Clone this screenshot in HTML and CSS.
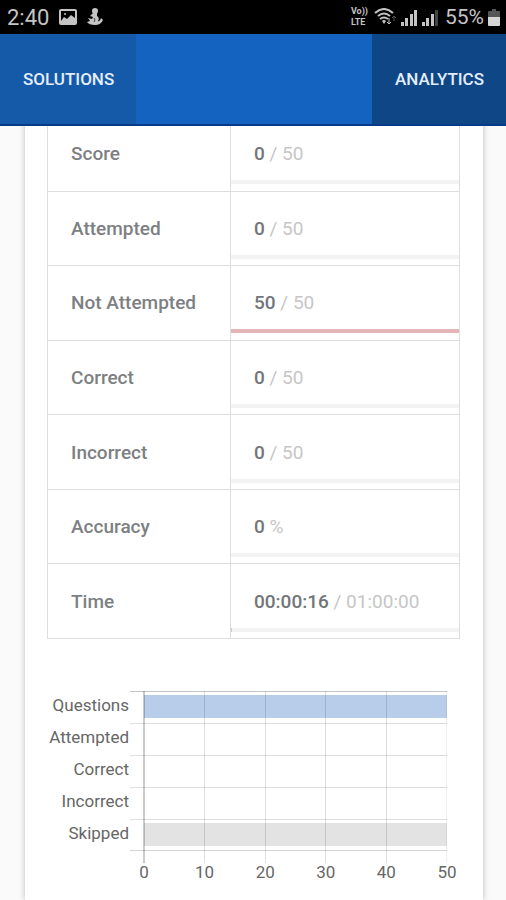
FILE: index.html
```html
<!DOCTYPE html>
<html lang="en">

<head>
	<meta charset="UTF-8">
	<meta name="viewport" content="width=device-width, initial-scale=1.0">
	<title>Analytics</title>
	<link rel="stylesheet" href="styles.css">
</head>

<body>

	<div class="top">
		<div class="status">
			<span class="clock">2:40</span>
			<svg class="icon-image" width="18" height="16" viewBox="0 0 18 16">
				<rect x="1" y="1" width="16" height="14" rx="1" fill="none" stroke="#c4c4c4" stroke-width="2" />
				<path d="M2 12 L5 8 L8 10 L12 6 L16 9 V14 H2 Z" fill="#c4c4c4" />
				<circle cx="6" cy="5" r="1" fill="#c4c4c4" />
			</svg>
			<svg class="icon-app" width="16" height="18" viewBox="0 0 16 18">
				<circle cx="8" cy="3" r="3" fill="#c4c4c4" />
				<path d="M6 5 H10 L10 8 Q13 10 11 13 Q13 14 14 10 L16 12 Q14 17 8 17 Q2 17 0 14 L3 13 L1 10 L5 11 L6 9 L3 8 Z" fill="#c4c4c4" />
				<path d="M7 10 L8 12 L7 14" fill="none" stroke="#444" />
			</svg>
			<span class="space"></span>
			<span class="volte">
				<span>Vo))</span>
				<span>LTE</span>
			</span>
			<svg class="icon-wifi" width="22" height="18" viewBox="0 0 22 18" fill="none" stroke="#c4c4c4" stroke-width="2">
				<path d="M1 5 Q10 -3 19 5" />
				<path d="M4 8 Q10 3 16 8" />
				<path d="M6 11 Q10 8 14 11" />
				<path d="M8 13 Q10 11 12 13 L10 16 Z" fill="#c4c4c4" stroke="none" />
				<path d="M15 10 V16 M13 14 L15 16 L17 14" stroke-width="1" />
				<path d="M20 8 V13 M18 10 L20 8 L22 10" stroke="#555" stroke-width="1" />
			</svg>
			<svg class="icon-signal" width="16" height="17" viewBox="0 0 16 17" fill="#c4c4c4">
				<rect x="0" y="13" width="3" height="4" />
				<rect x="4" y="9" width="3" height="8" />
				<rect x="9" y="5" width="3" height="12" />
				<rect x="13" y="1" width="3" height="16" />
			</svg>
			<svg class="icon-signal" width="16" height="17" viewBox="0 0 16 17" fill="#c4c4c4">
				<rect x="0" y="13" width="3" height="4" />
				<rect x="4" y="9" width="3" height="8" />
				<rect x="9" y="5" width="3" height="12" />
				<rect x="13" y="1" width="3" height="16" fill="#444" />
			</svg>
			<span class="percent">55%</span>
			<svg class="icon-battery" width="12" height="17" viewBox="0 0 12 17">
				<path d="M4 0 H8 V2 H11 Q12 2 12 3 V8 H0 V3 Q0 2 1 2 H4 Z" fill="#555" />
				<path d="M0 8 H12 V16 Q12 17 11 17 H1 Q0 17 0 16 Z" fill="#d6d6d6" />
			</svg>
		</div>
		<nav class="tabs">
			<button type="button" class="tab">SOLUTIONS</button>
			<button type="button" class="tab tab-active">ANALYTICS</button>
		</nav>
	</div>

	<main class="card">
		<table class="stats">
			<tbody>
				<tr>
					<th scope="row">Score</th>
					<td>
						<div class="value">0 <span>/ 50</span></div>
						<div class="bar"></div>
					</td>
				</tr>
				<tr>
					<th scope="row">Attempted</th>
					<td>
						<div class="value">0 <span>/ 50</span></div>
						<div class="bar"></div>
					</td>
				</tr>
				<tr>
					<th scope="row">Not Attempted</th>
					<td>
						<div class="value">50 <span>/ 50</span></div>
						<div class="bar"><div class="fill fill-red" style="width: 100%"></div></div>
					</td>
				</tr>
				<tr>
					<th scope="row">Correct</th>
					<td>
						<div class="value">0 <span>/ 50</span></div>
						<div class="bar"></div>
					</td>
				</tr>
				<tr>
					<th scope="row">Incorrect</th>
					<td>
						<div class="value">0 <span>/ 50</span></div>
						<div class="bar"></div>
					</td>
				</tr>
				<tr>
					<th scope="row">Accuracy</th>
					<td>
						<div class="value">0 <span>%</span></div>
						<div class="bar"></div>
					</td>
				</tr>
				<tr>
					<th scope="row">Time</th>
					<td>
						<div class="value">00:00:16 <span>/ 01:00:00</span></div>
						<div class="bar"><div class="fill" style="width: 0.44%"></div></div>
					</td>
				</tr>
			</tbody>
		</table>

		<div class="chart">
			<div class="chart-row">
				<div class="chart-label">Questions</div>
				<div class="track"><div class="chart-bar blue" style="width: 100%"></div></div>
			</div>
			<div class="chart-row">
				<div class="chart-label">Attempted</div>
				<div class="track"></div>
			</div>
			<div class="chart-row">
				<div class="chart-label">Correct</div>
				<div class="track"></div>
			</div>
			<div class="chart-row">
				<div class="chart-label">Incorrect</div>
				<div class="track"></div>
			</div>
			<div class="chart-row">
				<div class="chart-label">Skipped</div>
				<div class="track"><div class="chart-bar grey" style="width: 100%"></div></div>
			</div>
			<!-- vertical grid lines, drawn over the bars -->
			<div class="grid-lines">
				<div></div>
				<div></div>
				<div></div>
				<div></div>
				<div></div>
			</div>
			<div class="axis">
				<span>0</span>
				<span>10</span>
				<span>20</span>
				<span>30</span>
				<span>40</span>
				<span>50</span>
			</div>
		</div>
	</main>

</body>

</html>
```

FILE: styles.css
```css
* {
	box-sizing: border-box;
}

body {
	margin: 0;
	min-height: 100vh;
	display: flex;
	flex-direction: column;
	background-color: #fafafa;
	font-family: Roboto, sans-serif;
}

.top {
	position: sticky;
	top: 0;
	z-index: 2;
}

/* status bar */
.status {
	display: flex;
	align-items: center;
	height: 34px;
	padding: 0 6px 0 7px;
	background-color: #000;
	color: #c4c4c4;
	font-size: 22px;
}

.space {
	flex: 1;
}

.icon-image {
	margin-left: 10px;
}

.icon-app {
	margin-left: 10px;
}

.volte {
	display: flex;
	flex-direction: column;
	font-size: 9px;
	font-weight: 700;
	line-height: 11px;
}

.icon-wifi {
	margin-left: 6px;
}

.icon-signal {
	margin-left: 5px;
}

.percent {
	margin-left: 7px;
	font-size: 21px;
}

.icon-battery {
	margin-left: 4px;
}

/* tabs */
.tabs {
	display: flex;
	justify-content: space-between;
	height: 92px;
	background-color: #1563c0;
	border-bottom: 2px solid #043a86;
}

.tab {
	padding: 0 22px 0 23px;
	border: none;
	background-color: #155aa9;
	color: #e4eefa;
	font-family: inherit;
	font-size: 17px;
	font-weight: 500;
	cursor: pointer;
}

.tab-active {
	background-color: #0f4686;
}

.card {
	flex: 1;
	margin: -10px 23px 0 25px;
	padding: 0 23px 16px 22px;
	background-color: #fff;
	box-shadow: 0 0 6px rgba(0, 0, 0, 0.25);
}

/* results table */
.stats {
	width: 100%;
	height: 523px;
	table-layout: fixed;
	border-collapse: collapse;
	font-size: 19px;
	color: #7d8083;
}

.stats th,
.stats td {
	padding: 0;
	border: 1px solid #dedede;
}

.stats th {
	width: 183px;
	padding-left: 23px;
	text-align: left;
	font-weight: 500;
}

.value {
	padding: 10px 0 0 23px;
	line-height: 53px;
	color: #72767a;
	font-weight: 500;
}

.value span {
	color: #c6c6c6;
	font-weight: 400;
}

.bar {
	height: 4px;
	margin-bottom: 6px;
	background-color: #f3f3f3;
}

.fill {
	height: 4px;
	background-color: #ccc;
}

.fill-red {
	background-color: #e3b5b9;
}

/* bar chart */
.chart {
	position: relative;
	margin: 52px 13px 0 0;
	font-size: 17px;
	color: #666;
}

.chart-row {
	display: flex;
	height: 32px;
}

.chart-label {
	width: 82px;
	margin-right: 1px;
	line-height: 29px;
	text-align: right;
}

.track {
	flex: 1;
	padding: 3px 0 0 14px;
	border-top: 1px solid #dedede;
}

.chart-row:first-child .track {
	border-top-color: #c4c4c4;
}

.chart-row:nth-child(5) .track {
	border-bottom: 1px solid #d4d4d4;
}

.chart-bar {
	height: 23px;
}

.blue {
	background-color: #b7cde9;
}

.grey {
	background-color: #e3e3e3;
}

.grid-lines {
	position: absolute;
	top: 0;
	bottom: 18px;
	left: 96px;
	right: 0;
	display: flex;
	border-left: 2px solid rgba(0, 0, 0, 0.2);
}

.grid-lines div {
	flex: 1;
	border-right: 1px solid rgba(0, 0, 0, 0.13);
}

.grid-lines div:last-child {
	border-right-color: rgba(0, 0, 0, 0.06);
}

.axis {
	display: flex;
	justify-content: space-between;
	margin: 0 -10px 0 87px;
	padding-top: 12px;
	line-height: 18px;
}

.axis span {
	width: 20px;
	text-align: center;
}
```
